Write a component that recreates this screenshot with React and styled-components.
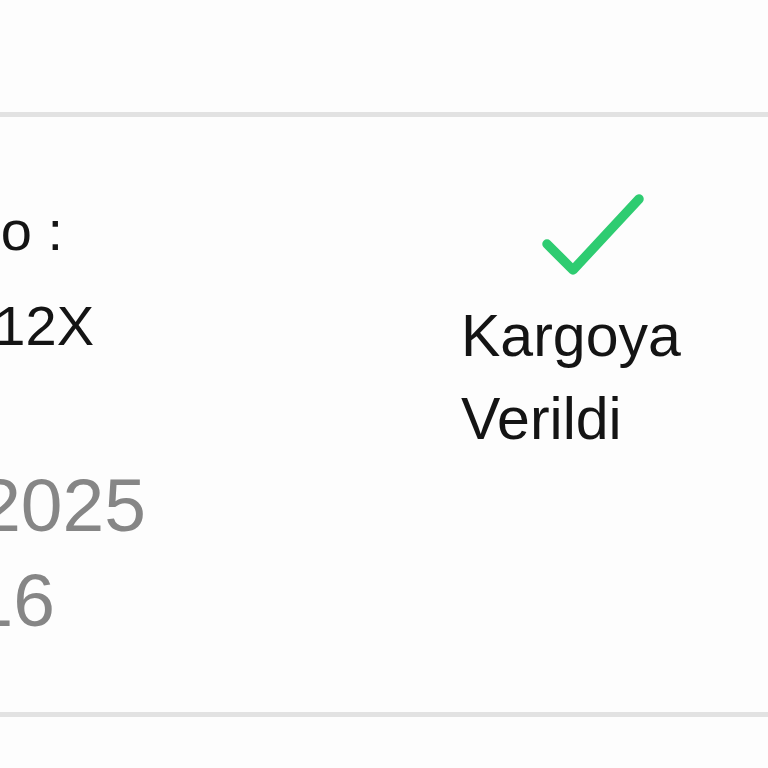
import React from "react";
import styled, { createGlobalStyle } from "styled-components";

const Global = createGlobalStyle`
  html, body { margin: 0; padding: 0; background: #fdfdfd; }
  body { font-family: "Liberation Sans", Arial, sans-serif; overflow: hidden; }
`;

const Page = styled.div`
  width: 768px;
  height: 768px;
  padding-top: 112px;
  box-sizing: border-box;
  overflow: hidden;
`;

const Card = styled.section`
  display: flex;
  height: 605px;
  box-sizing: border-box;
  border-top: 5px solid #e2e2e2;
  border-bottom: 5px solid #e2e2e2;
  background: #fdfdfd;
`;

const InfoColumn = styled.div`
  width: 461px;
  flex-shrink: 0;
  display: flex;
  flex-direction: column;
  padding-top: 66px;
  overflow: hidden;
`;

const Line = styled.div`
  display: flex;
  justify-content: flex-end;
  width: ${(p) => p.$end}px;
  white-space: nowrap;
  line-height: 95px;
  font-size: ${(p) => (p.$muted ? 75 : 56)}px;
  color: ${(p) => (p.$muted ? "#868686" : "#141414")};
`;

const Group = styled.div`
  display: flex;
  flex-direction: column;
  & + & { margin-top: 85px; }
`;

const StatusColumn = styled.div`
  display: flex;
  flex-direction: column;
  padding-top: 71px;
`;

const Check = styled.svg`
  display: block;
  width: 120px;
  height: 92px;
  margin-left: 69px;
`;

const StatusText = styled.div`
  margin-top: 15px;
  font-size: 59px;
  line-height: 83px;
  color: #141414;
`;

export default function App() {
  return (
    <>
      <Global />
      <Page>
        <Card>
          <InfoColumn>
            <Group>
              <Line $end={63}><span>Sipariş No :</span></Line>
              <Line $end={94}><span>TR2512X</span></Line>
            </Group>
            <Group>
              <Line $end={146} $muted><span>15.07.2025</span></Line>
              <Line $end={55} $muted><span>14.16</span></Line>
            </Group>
          </InfoColumn>
          <StatusColumn>
            <Check viewBox="0 0 120 92" fill="none">
              <path
                d="M17 56 L43 82 L109 11"
                stroke="#2ecc71"
                strokeWidth="9.5"
                strokeLinecap="round"
                strokeLinejoin="round"
              />
            </Check>
            <StatusText>
              Kargoya
              <br />
              Verildi
            </StatusText>
          </StatusColumn>
        </Card>
      </Page>
    </>
  );
}
